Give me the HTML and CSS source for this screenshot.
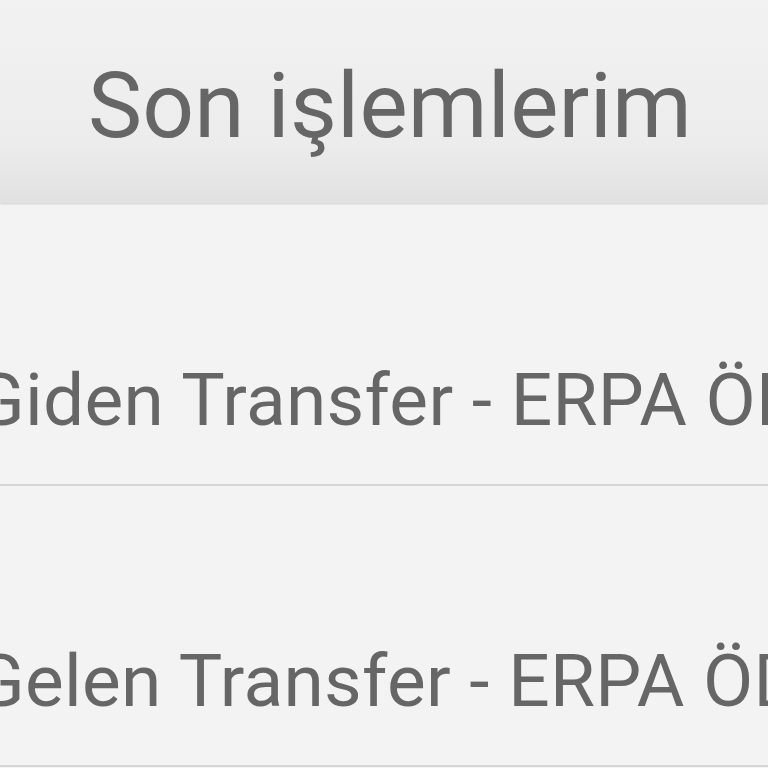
FILE: index.html
```html
<!DOCTYPE html>
<html>
  <head>
    <title>Son işlemlerim</title>
    <link rel="stylesheet" href="styles.css">
  </head>
  <body>
    <div class="header">
      <h1>Son işlemlerim</h1>
    </div>
    <ul class="list">
      <li class="item"><span>Giden Transfer - ERPA ÖD</span></li>
      <li class="item"><span>Gelen Transfer - ERPA ÖD</span></li>
    </ul>
  </body>
</html>
```

FILE: styles.css
```css
body {
  margin: 0;
  background-color: #f3f3f3;
  font-family: Roboto, "Noto Sans", sans-serif;
  color: #666;
  overflow: hidden;
}

.header {
  height: 203px;
  box-sizing: border-box;
  padding: 61px 0 0 12px;
  text-align: center;
  background: linear-gradient(#f2f2f2, #ececec 70%, #e1e1e1);
  box-shadow: 0 1px 2px rgba(0, 0, 0, 0.15);
  position: relative;
}

.header h1 {
  margin: 0;
  font-size: 91px;
  font-weight: normal;
  line-height: 1;
  letter-spacing: 0.2px;
}

.list {
  list-style: none;
  margin: 2px 0 0 0;
  padding: 0;
}

.item {
  height: 281px;
  box-sizing: border-box;
  display: flex;
  align-items: flex-end;
  padding-bottom: 47px;
  border-bottom: 2px solid #d6d6d6;
  font-size: 73px;
  line-height: 1;
  letter-spacing: 0.3px;
  white-space: nowrap;
  overflow: hidden;
}

.item span {
  margin-left: -25px;
}
```
